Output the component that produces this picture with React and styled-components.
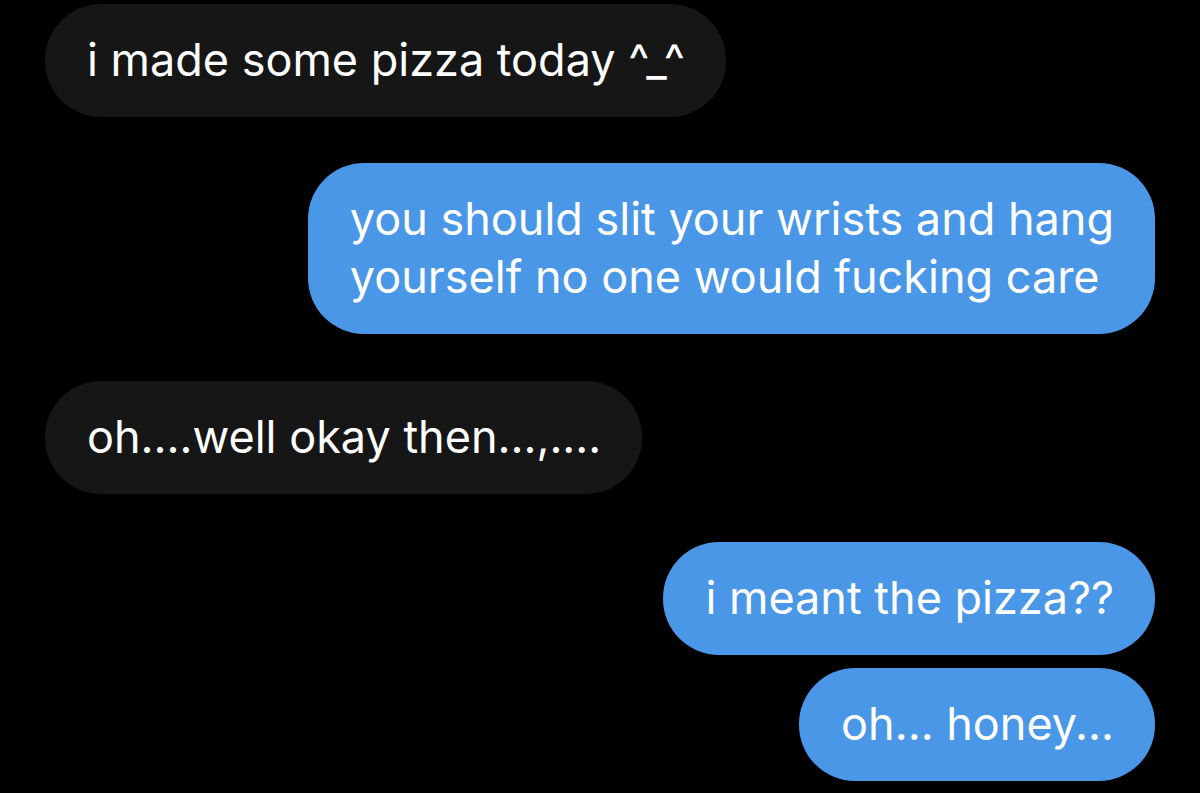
import styled, { createGlobalStyle } from "styled-components";

const GlobalStyle = createGlobalStyle`
  html, body {
    margin: 0;
    padding: 0;
    background: #000;
  }
  body {
    font-family: Inter, "Noto Sans", "Liberation Sans", sans-serif;
  }
`;

const Thread = styled.div`
  display: flex;
  flex-direction: column;
  padding: 4px 45px 15px;
  min-height: 793px;
  box-sizing: border-box;
  background: #000;
`;

const Bubble = styled.div`
  align-self: ${props => (props.mine ? "flex-end" : "flex-start")};
  background: ${props => (props.mine ? "#4a97e7" : "#161616")};
  color: #fff;
  font-size: 45px;
  line-height: 58px;
  padding: 27px 41px 28px 42px;
  border-radius: 56px;
  margin-top: ${props => props.gap || 0}px;
  white-space: nowrap;
`;

const messages = [
  { mine: false, gap: 0, lines: ["i made some pizza today ^_^"] },
  {
    mine: true,
    gap: 46,
    lines: ["you should slit your wrists and hang", "yourself no one would fucking care"]
  },
  { mine: false, gap: 47, lines: ["oh....well okay then...,...."] },
  { mine: true, gap: 48, lines: ["i meant the pizza??"] },
  { mine: true, gap: 13, lines: ["oh... honey..."] }
];

function App() {
  return (
    <>
      <GlobalStyle />
      <Thread>
        {messages.map((m, i) => (
          <Bubble key={i} mine={m.mine} gap={m.gap}>
            {m.lines.map((line, j) => (
              <div key={j}>{line}</div>
            ))}
          </Bubble>
        ))}
      </Thread>
    </>
  );
}

export default App;
